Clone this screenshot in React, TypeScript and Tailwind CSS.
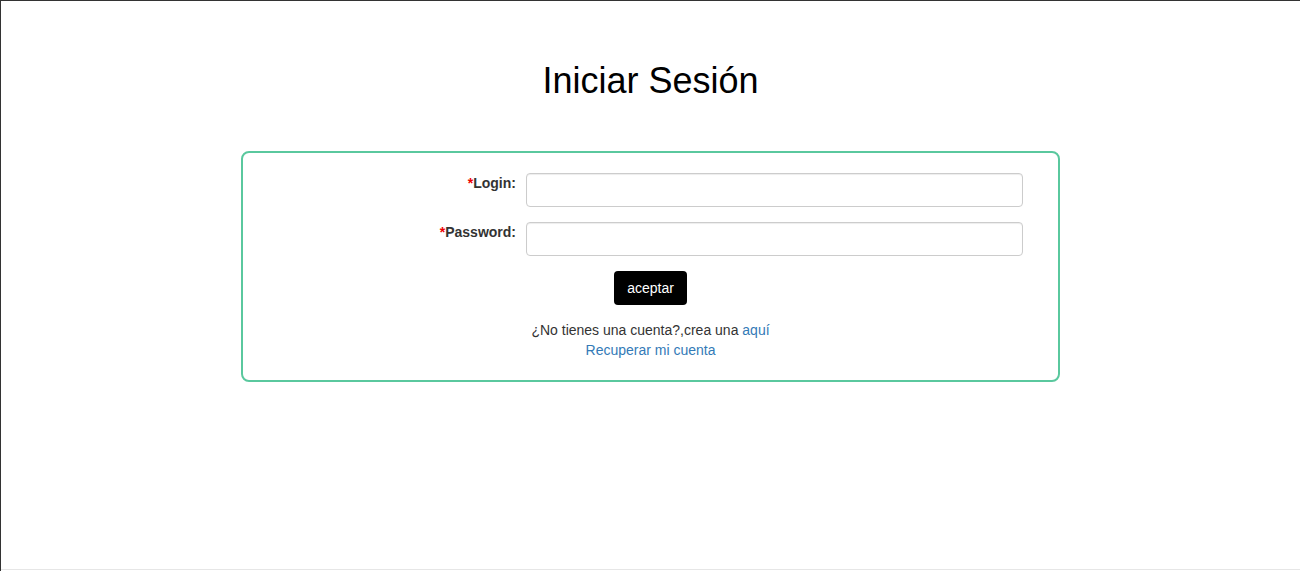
import React from 'react';

const FONT = { fontFamily: '"Liberation Sans", Arial, sans-serif' };

function Field({ label, type }: { label: string; type: string }): JSX.Element {
  return (
    <div className="flex items-start">
      <label className="w-[283px] pr-[10px] pt-0 text-right text-sm font-bold leading-5 text-[#333]">
        <span className="text-[#e00]">*</span>
        {label}:
      </label>
      <input
        type={type}
        className="h-[34px] w-[497px] rounded border border-[#ccc] px-3 text-sm text-[#555] shadow-[inset_0_1px_1px_rgba(0,0,0,0.075)] outline-none"
      />
    </div>
  );
}

export default function App(): JSX.Element {
  return (
    <div
      className="h-[571px] w-[1300px] overflow-hidden border-l border-t border-[#333] bg-white"
      style={FONT}
    >
      <div className="flex h-[569px] flex-col items-center border-b border-[#e6e6e6]">
        <h1 className="mt-[58px] text-[36px] leading-[44px] text-black">Iniciar Sesión</h1>

        <div className="mt-[48px] w-[819px] rounded-lg border-2 border-[#5ac89e] pb-[20px] pt-[20px]">
          <div className="flex flex-col gap-[15px]">
            <Field label="Login" type="text" />
            <Field label="Password" type="password" />
          </div>

          <div className="mt-[15px] flex justify-center">
            <button
              type="button"
              className="h-[34px] w-[73px] rounded bg-black text-sm text-white"
            >
              aceptar
            </button>
          </div>

          <div className="mt-[15px] text-center text-sm leading-5 text-[#333]">
            <p>
              ¿No tienes una cuenta?,crea una{' '}
              <a href="#" className="text-[#337ab7]">
                aquí
              </a>
            </p>
            <p>
              <a href="#" className="text-[#337ab7]">
                Recuperar mi cuenta
              </a>
            </p>
          </div>
        </div>
      </div>
    </div>
  );
}
